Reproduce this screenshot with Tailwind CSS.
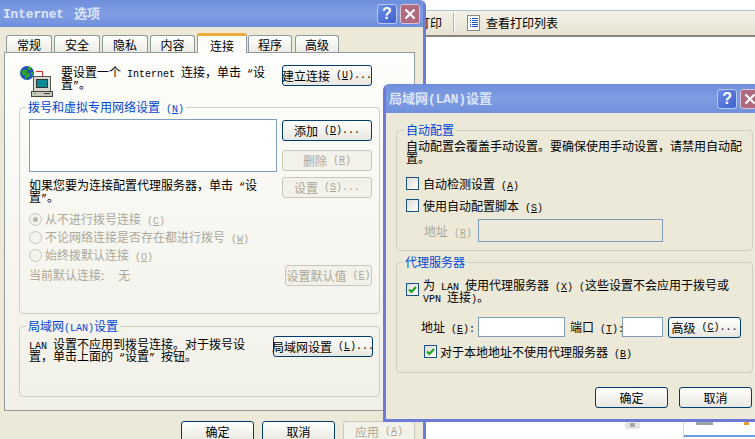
<!DOCTYPE html>
<html lang="zh-CN">

<head>
	<meta charset="UTF-8" />
	<meta name="viewport" content="width=device-width, initial-scale=1.0" />
	<title>Internet 选项</title>
	<script src="https://cdn.jsdelivr.net/npm/@tailwindcss/browser@4"></script>
</head>

<body class="relative w-[755px] h-[439px] overflow-hidden whitespace-nowrap bg-white text-black text-[12px] leading-[12px] font-['Noto_Sans_CJK_SC','Noto_Sans',sans-serif]">

	<!-- page behind the dialogs -->
	<div class="mt-[10px] h-[27px] flex items-center pl-[418px] border-t border-t-[#a9c6d6] border-b-2 border-b-[#85837a] bg-gradient-to-b from-[#f4f2e8] to-[#e6e3d3]">
		<span>打印</span>
		<span class="ml-[11px] w-[2px] h-[20px] border-l border-l-[#b5b3a5] border-r border-r-white"></span>
		<svg class="ml-[12px]" width="13" height="16" viewBox="0 0 13 16" shape-rendering="crispEdges">
			<rect x="0.5" y="0.5" width="12" height="15" fill="#fff" stroke="#8a8a8a" />
			<path d="M3 3h1v1H3zM3 5h1v1H3zM3 7h1v1H3zM3 9h1v1H3zM3 11h1v1H3zM5 3h6v1H5zM5 5h6v1H5zM5 7h6v1H5zM5 9h6v1H5zM5 11h6v1H5z" fill="#1c50b8" />
		</svg>
		<span class="ml-[6px]">查看打印列表</span>
	</div>
	<div class="absolute left-[683px] top-[422px] w-[72px] h-[17px] border-l border-l-[#d8d8d8]">
		<div class="ml-[12px] w-[17px] h-[3px] bg-[#9aa5a8]"></div>
		<div class="absolute left-[60px] top-0 w-[5px] h-[3px] bg-[#e8a030]"></div>
		<div class="mt-[10px] h-[2px] bg-[#6f9be0]"></div>
	</div>
	<div class="absolute left-[625px] top-[422px] w-[15px] h-[7px] bg-[#e6e6e0] rounded-b-[2px] flex justify-center">
		<div class="w-[5px] h-[4px] mt-[1px] bg-[#a8a8a8]"></div>
	</div>

	<!-- Internet 选项 -->
	<div class="absolute left-0 top-0 w-[426px] h-[439px] bg-[#ece9d8] border-r-[3px] border-r-[#6b7ed6] rounded-tr-[6px] overflow-hidden">
		<div class="h-[27px] flex items-center pl-[3px] bg-gradient-to-b from-[#6d8edb] via-[#7f9de3] to-[#6f90dc]">
			<span class="font-bold text-[#dce5f8] text-[13px]"><span class="font-['Liberation_Mono'] text-[12.7px]">Internet</span><span class="ml-[10px]">选项</span></span>
			<div class="ml-auto mr-[3px] flex gap-[3px]">
				<div class="w-[20px] h-[20px] rounded-[3px] border border-[#b9c8f0] bg-gradient-to-br from-[#6f8ee4] to-[#3d5fcf] text-white font-bold text-[16px] leading-[18px] text-center font-['Liberation_Sans']">?</div>
				<div class="w-[20px] h-[20px] rounded-[3px] border border-[#d9c2d2] bg-[#b06a80] flex items-center justify-center">
					<svg width="12" height="12" viewBox="0 0 12 12"><path d="M1.5 1.5l9 9M10.5 1.5l-9 9" stroke="#fff" stroke-width="2.2" /></svg>
				</div>
			</div>
		</div>

		<div class="mt-[6px] ml-[6px] h-[19px] flex items-end gap-[2px]">
			<div class="w-[46px] h-[17px] pt-[3px] text-center rounded-t-[3px] border border-b-0 border-[#919b9c] bg-gradient-to-b from-white to-[#ecebe5]">常规</div>
			<div class="w-[46px] h-[17px] pt-[3px] text-center rounded-t-[3px] border border-b-0 border-[#919b9c] bg-gradient-to-b from-white to-[#ecebe5]">安全</div>
			<div class="w-[46px] h-[17px] pt-[3px] text-center rounded-t-[3px] border border-b-0 border-[#919b9c] bg-gradient-to-b from-white to-[#ecebe5]">隐私</div>
			<div class="w-[45px] h-[17px] pt-[3px] text-center rounded-t-[3px] border border-b-0 border-[#919b9c] bg-gradient-to-b from-white to-[#ecebe5]">内容</div>
			<div class="relative z-10 -mb-px w-[50px] h-[20px] pt-[4px] text-center rounded-t-[3px] border-t-[3px] border-x border-t-[#f2a93c] border-x-[#919b9c] bg-[#fdfdfb]">连接</div>
			<div class="-ml-[1px] w-[44px] h-[17px] pt-[3px] text-center rounded-t-[3px] border border-b-0 border-[#919b9c] bg-gradient-to-b from-white to-[#ecebe5]">程序</div>
			<div class="ml-[1px] w-[44px] h-[17px] pt-[3px] text-center rounded-t-[3px] border border-b-0 border-[#919b9c] bg-gradient-to-b from-white to-[#ecebe5]">高级</div>
		</div>

		<div class="ml-[4px] w-[411px] h-[359px] border border-[#919b9c] bg-gradient-to-b from-[#fdfdfb] to-[#f1f0e8] pl-[14px]">
			<div class="h-[48px] pt-[12px] flex">
				<svg width="34" height="32" viewBox="0 0 34 32" shape-rendering="crispEdges">
					<circle cx="8" cy="8" r="7" fill="#1f56b8" shape-rendering="auto" />
					<path d="M3 5h5v3h3v4H8v2H6V10H3zM9 2h3v3H9zM12 7h2v3h-2z" fill="#2ea02e" />
					<path d="M17 6h6v1h-6zM23 6h1v7h-1z" fill="#e02828" />
					<rect x="14" y="11" width="17" height="15" fill="#d8d8cc" stroke="#555" />
					<rect x="17" y="14" width="11" height="8" fill="#0f8a96" stroke="#333" />
					<rect x="12" y="26" width="21" height="5" fill="#c8c8bc" stroke="#444" />
					<rect x="15" y="28" width="2" height="1" fill="#22cc22" />
					<rect x="25" y="28" width="6" height="1" fill="#444" />
				</svg>
				<div class="ml-[8px] w-[210px] pt-[1px]">要设置一个<span class="font-['Liberation_Mono'] text-[10px] leading-[0px]"> Internet </span>连接，单击<span class="font-['Liberation_Mono'] text-[10px] leading-[0px]"> “</span>设<br />置<span class="font-['Liberation_Mono'] text-[10px] leading-[0px]">”</span>。</div>
				<div class="ml-[11px] w-[90px] h-[21px] flex items-center justify-center rounded-[3px] border border-[#003c74] bg-gradient-to-b from-white to-[#e8e7df]">建立连接<span class="font-['Liberation_Mono'] text-[10px] leading-[0px]">&nbsp;(<u>U</u>)...</span></div>
			</div>

			<fieldset class="w-[361px] h-[213px] border border-[#d0d0bf] rounded-[4px] pl-[9px]">
				<legend class="-ml-[3px] px-[2px] text-[#0046d5]">拨号和虚拟专用网络设置<span class="font-['Liberation_Mono'] text-[10px] leading-[0px]">&nbsp;(<u>N</u>)</span></legend>
				<div class="flex">
					<div class="w-[248px] pt-[6px]">
						<div class="h-[53px] border border-[#7f9db9] bg-white"></div>
						<div class="mt-[7px]">如果您要为连接配置代理服务器，单击<span class="font-['Liberation_Mono'] text-[10px] leading-[0px]"> “</span>设<br />置<span class="font-['Liberation_Mono'] text-[10px] leading-[0px]">”</span>。</div>
						<div class="mt-[9px] h-[14px] flex items-center text-[#aca899]">
							<div class="w-[13px] h-[13px] rounded-full border border-[#c9c7ba] bg-[#f4f4ee] flex items-center justify-center"><div class="w-[5px] h-[5px] rounded-full bg-[#b8b6a8]"></div></div>
							<span class="ml-[3px]">从不进行拨号连接<span class="font-['Liberation_Mono'] text-[10px] leading-[0px]">&nbsp;(<u>C</u>)</span></span>
						</div>
						<div class="mt-[4px] h-[14px] flex items-center text-[#aca899]">
							<div class="w-[13px] h-[13px] rounded-full border border-[#c9c7ba] bg-[#f4f4ee]"></div>
							<span class="ml-[3px]">不论网络连接是否存在都进行拨号<span class="font-['Liberation_Mono'] text-[10px] leading-[0px]">&nbsp;(<u>W</u>)</span></span>
						</div>
						<div class="mt-[4px] h-[14px] flex items-center text-[#aca899]">
							<div class="w-[13px] h-[13px] rounded-full border border-[#c9c7ba] bg-[#f4f4ee]"></div>
							<span class="ml-[3px]">始终拨默认连接<span class="font-['Liberation_Mono'] text-[10px] leading-[0px]">&nbsp;(<u>O</u>)</span></span>
						</div>
						<div class="mt-[7px] text-[#aca899]">当前默认连接:<span class="ml-[14px]">无</span></div>
					</div>
					<div class="ml-[5px] w-[90px] pt-[7px]">
						<div class="h-[21px] flex items-center justify-center rounded-[3px] border border-[#003c74] bg-gradient-to-b from-white to-[#e8e7df]">添加<span class="font-['Liberation_Mono'] text-[10px] leading-[0px]">&nbsp;(<u>D</u>)...</span></div>
						<div class="mt-[9px] h-[21px] flex items-center justify-center rounded-[3px] border border-[#c9c7ba] bg-[#f2f1ea] text-[#aca899]">删除<span class="font-['Liberation_Mono'] text-[10px] leading-[0px]">&nbsp;(<u>R</u>)</span></div>
						<div class="mt-[6px] h-[21px] flex items-center justify-center rounded-[3px] border border-[#c9c7ba] bg-[#f2f1ea] text-[#aca899]">设置<span class="font-['Liberation_Mono'] text-[10px] leading-[0px]">&nbsp;(<u>S</u>)...</span></div>
						<div class="mt-[67px] ml-[3px] w-[87px] h-[21px] flex items-center justify-center rounded-[3px] border border-[#c9c7ba] bg-[#f2f1ea] text-[#aca899]">设置默认值<span class="font-['Liberation_Mono'] text-[10px] leading-[0px]">&nbsp;(<u>E</u>)</span></div>
					</div>
				</div>
			</fieldset>

			<fieldset class="mt-[6px] w-[361px] h-[77px] border border-[#d0d0bf] rounded-[4px] pl-[9px]">
				<legend class="-ml-[3px] px-[2px] text-[#0046d5]">局域网<span class="font-['Liberation_Mono'] text-[10px] leading-[0px]">(LAN)</span>设置</legend>
				<div class="flex">
					<div class="w-[244px] pt-[6px]"><span class="font-['Liberation_Mono'] text-[10px] leading-[0px]">LAN </span>设置不应用到拨号连接。对于拨号设<br />置，单击上面的<span class="font-['Liberation_Mono'] text-[10px] leading-[0px]"> “</span>设置<span class="font-['Liberation_Mono'] text-[10px] leading-[0px]">” </span>按钮。</div>
					<div class="mt-[4px] w-[100px] h-[21px] flex items-center justify-center rounded-[3px] border border-[#003c74] bg-gradient-to-b from-white to-[#e8e7df]">局域网设置<span class="font-['Liberation_Mono'] text-[10px] leading-[0px]">&nbsp;(<u>L</u>)...</span></div>
				</div>
			</fieldset>
		</div>

		<div class="mt-[10px] ml-[181px] flex gap-[8px]">
			<div class="w-[73px] h-[21px] flex items-center justify-center rounded-[3px] border border-[#003c74] bg-gradient-to-b from-white to-[#e8e7df]">确定</div>
			<div class="w-[73px] h-[21px] flex items-center justify-center rounded-[3px] border border-[#003c74] bg-gradient-to-b from-white to-[#e8e7df]">取消</div>
			<div class="w-[72px] h-[21px] flex items-center justify-center rounded-[3px] border border-[#c9c7ba] bg-[#f2f1ea] text-[#aca899]">应用<span class="font-['Liberation_Mono'] text-[10px] leading-[0px]">&nbsp;(<u>A</u>)</span></div>
		</div>
	</div>

	<!-- 局域网(LAN)设置 -->
	<div class="absolute left-[383px] top-[84px] w-[372px] h-[338px] bg-[#ece9d8] border-l-[3px] border-b-[3px] border-[#6f7ad8] rounded-tl-[6px] overflow-hidden">
		<div class="h-[29px] flex items-center pl-[3px] bg-gradient-to-b from-[#6d8edb] via-[#7f9de3] to-[#6f90dc]">
			<span class="font-bold text-[#dce5f8] text-[13px]">局域网<span class="font-['Liberation_Mono'] text-[12.7px]">(LAN)</span>设置</span>
			<div class="ml-[225px] flex gap-[3px] shrink-0">
				<div class="w-[20px] h-[20px] rounded-[3px] border border-[#b9c8f0] bg-gradient-to-br from-[#6f8ee4] to-[#3d5fcf] text-white font-bold text-[16px] leading-[18px] text-center font-['Liberation_Sans']">?</div>
				<div class="w-[20px] h-[20px] rounded-[3px] border border-[#d9c2d2] bg-[#b06a80] flex items-center justify-center shrink-0">
					<svg class="shrink-0" width="12" height="12" viewBox="0 0 12 12"><path d="M1.5 1.5l9 9M10.5 1.5l-9 9" stroke="#fff" stroke-width="2.2" /></svg>
				</div>
			</div>
		</div>

		<div class="pl-[10px] pt-[11px]">
			<fieldset class="w-[357px] h-[127px] border border-[#d0d0bf] rounded-[4px] pl-[9px]">
				<legend class="-ml-[2px] px-[2px] text-[#0046d5]">自动配置</legend>
				<div class="pt-[4px]">自动配置会覆盖手动设置。要确保使用手动设置，请禁用自动配<br />置。</div>
				<div class="mt-[13px] h-[13px] flex items-center">
					<div class="w-[13px] h-[13px] border border-[#1c5180] bg-gradient-to-br from-[#dcdcd7] to-white"></div>
					<span class="ml-[4px]">自动检测设置<span class="font-['Liberation_Mono'] text-[10px] leading-[0px]">&nbsp;(<u>A</u>)</span></span>
				</div>
				<div class="mt-[9px] h-[13px] flex items-center">
					<div class="w-[13px] h-[13px] border border-[#1c5180] bg-gradient-to-br from-[#dcdcd7] to-white"></div>
					<span class="ml-[4px]">使用自动配置脚本<span class="font-['Liberation_Mono'] text-[10px] leading-[0px]">&nbsp;(<u>S</u>)</span></span>
				</div>
				<div class="mt-[7px] flex items-center">
					<span class="ml-[18px] w-[54px] text-[#aca899]">地址<span class="font-['Liberation_Mono'] text-[10px] leading-[0px]">&nbsp;(<u>R</u>)</span></span>
					<div class="w-[185px] h-[23px] border border-[#7f9db9] bg-[#ece9d8]"></div>
				</div>
			</fieldset>

			<fieldset class="mt-[5px] w-[357px] h-[117px] border border-[#d0d0bf] rounded-[4px] pl-[9px]">
				<legend class="-ml-[3px] px-[2px] text-[#0046d5]">代理服务器</legend>
				<div class="pt-[11px] flex">
					<div class="mt-[4px] w-[13px] h-[13px] border border-[#1c5180] bg-gradient-to-br from-[#dcdcd7] to-white">
						<svg width="11" height="11" viewBox="0 0 11 11"><path d="M2 5.5l2.5 2.5L9 3" fill="none" stroke="#21a121" stroke-width="2.2" /></svg>
					</div>
					<div class="ml-[4px]">为<span class="font-['Liberation_Mono'] text-[10px] leading-[0px]"> LAN </span>使用代理服务器<span class="font-['Liberation_Mono'] text-[10px] leading-[0px]">&nbsp;(<u>X</u>) (</span>这些设置不会应用于拨号或<br /><span class="font-['Liberation_Mono'] text-[10px] leading-[0px]">VPN </span>连接<span class="font-['Liberation_Mono'] text-[10px] leading-[0px]">)</span>。</div>
				</div>
				<div class="mt-[13px] flex items-center">
					<span class="ml-[15px] w-[57px]">地址<span class="font-['Liberation_Mono'] text-[10px] leading-[0px]">&nbsp;(<u>E</u>):</span></span>
					<div class="w-[87px] h-[20px] border border-[#7f9db9] bg-white"></div>
					<span class="ml-[5px] w-[52px]">端口<span class="font-['Liberation_Mono'] text-[10px] leading-[0px]">&nbsp;(<u>T</u>):</span></span>
					<div class="w-[41px] h-[20px] border border-[#7f9db9] bg-white"></div>
					<div class="ml-[5px] mt-[1px] w-[73px] h-[21px] flex items-center justify-center rounded-[3px] border border-[#003c74] bg-gradient-to-b from-white to-[#e8e7df]">高级<span class="font-['Liberation_Mono'] text-[10px] leading-[0px]">&nbsp;(<u>C</u>)...</span></div>
				</div>
				<div class="mt-[7px] ml-[18px] h-[13px] flex items-center">
					<div class="w-[13px] h-[13px] border border-[#1c5180] bg-gradient-to-br from-[#dcdcd7] to-white">
						<svg width="11" height="11" viewBox="0 0 11 11"><path d="M2 5.5l2.5 2.5L9 3" fill="none" stroke="#21a121" stroke-width="2.2" /></svg>
					</div>
					<span class="ml-[3px]">对于本地地址不使用代理服务器<span class="font-['Liberation_Mono'] text-[10px] leading-[0px]">&nbsp;(<u>B</u>)</span></span>
				</div>
			</fieldset>

			<div class="mt-[14px] ml-[199px] flex gap-[11px]">
				<div class="w-[73px] h-[21px] flex items-center justify-center rounded-[3px] border border-[#003c74] bg-gradient-to-b from-white to-[#e8e7df]">确定</div>
				<div class="w-[73px] h-[21px] flex items-center justify-center rounded-[3px] border border-[#003c74] bg-gradient-to-b from-white to-[#e8e7df]">取消</div>
			</div>
		</div>
	</div>
</body>

</html>
